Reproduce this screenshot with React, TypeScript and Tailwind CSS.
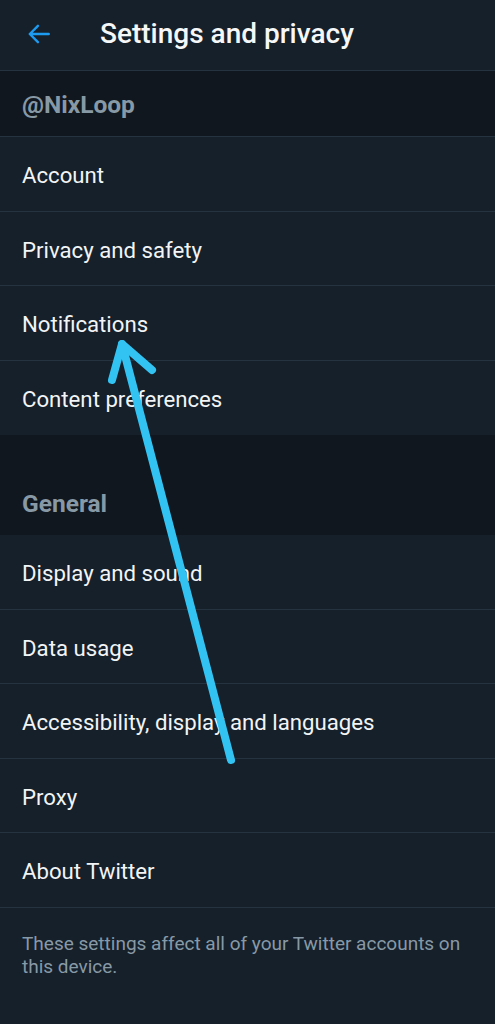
import React from 'react';

// --- Data ---
const accountItems = ['Account', 'Privacy and safety', 'Notifications', 'Content preferences'];
const generalItems = ['Display and sound', 'Data usage', 'Accessibility, display and languages', 'Proxy', 'About Twitter'];

function Row({ label, last }: { label: string; last?: boolean }) {
    return (
        <div className={`h-[74.5px] flex items-center px-[22px] pt-[4px] text-[22.2px] text-[#f2f4f5] ${last ? '' : 'border-b border-[#253341]'}`}>
            {label}
        </div>
    );
}

export default function App() {
    return (
        <div
            className="relative w-[495px] h-[1024px] overflow-hidden bg-[#15202b]"
            style={{ fontFamily: 'Roboto, "Noto Sans", sans-serif' }}
        >
            {/* Header */}
            <div className="h-[71px] flex items-center pb-[2px] border-b border-[#253341]">
                <svg className="ml-[26px] w-[26px] h-[26px]" viewBox="0 0 24 24" fill="none" stroke="#1d9bf0" strokeWidth="2.2" strokeLinecap="round" strokeLinejoin="round">
                    <path d="M21 12H3.5M11 4.5 3.5 12l7.5 7.5" />
                </svg>
                <h1 className="ml-[48px] text-[28px] font-medium text-[#f5f7f8]">Settings and privacy</h1>
            </div>

            {/* Account section */}
            <div className="h-[66px] flex items-center px-[22px] pt-[3px] bg-[#10171e] border-b border-[#253341]">
                <span className="text-[24.5px] font-bold text-[#8899a6]">@NixLoop</span>
            </div>
            {accountItems.map((item, i) => (
                <Row key={item} label={item} last={i === accountItems.length - 1} />
            ))}

            {/* General section */}
            <div className="h-[100px] flex items-end pb-[12px] px-[22px] bg-[#10171e]">
                <span className="text-[24.5px] font-bold text-[#8899a6]">General</span>
            </div>
            {generalItems.map((item) => (
                <Row key={item} label={item} />
            ))}

            {/* Footer note */}
            <p className="px-[22px] pt-[24px] text-[19px] leading-[23px] text-[#8899a6]">
                These settings affect all of your Twitter accounts on this device.
            </p>

            {/* Annotation arrow */}
            <svg className="absolute inset-0 w-full h-full pointer-events-none" viewBox="0 0 495 1024">
                <g stroke="#33c3f3" strokeWidth="8" strokeLinecap="round" strokeLinejoin="round" fill="none">
                    <path d="M231 760 L122 344" />
                    <path d="M112 380 L122 344 L152 370" />
                </g>
            </svg>
        </div>
    );
}
